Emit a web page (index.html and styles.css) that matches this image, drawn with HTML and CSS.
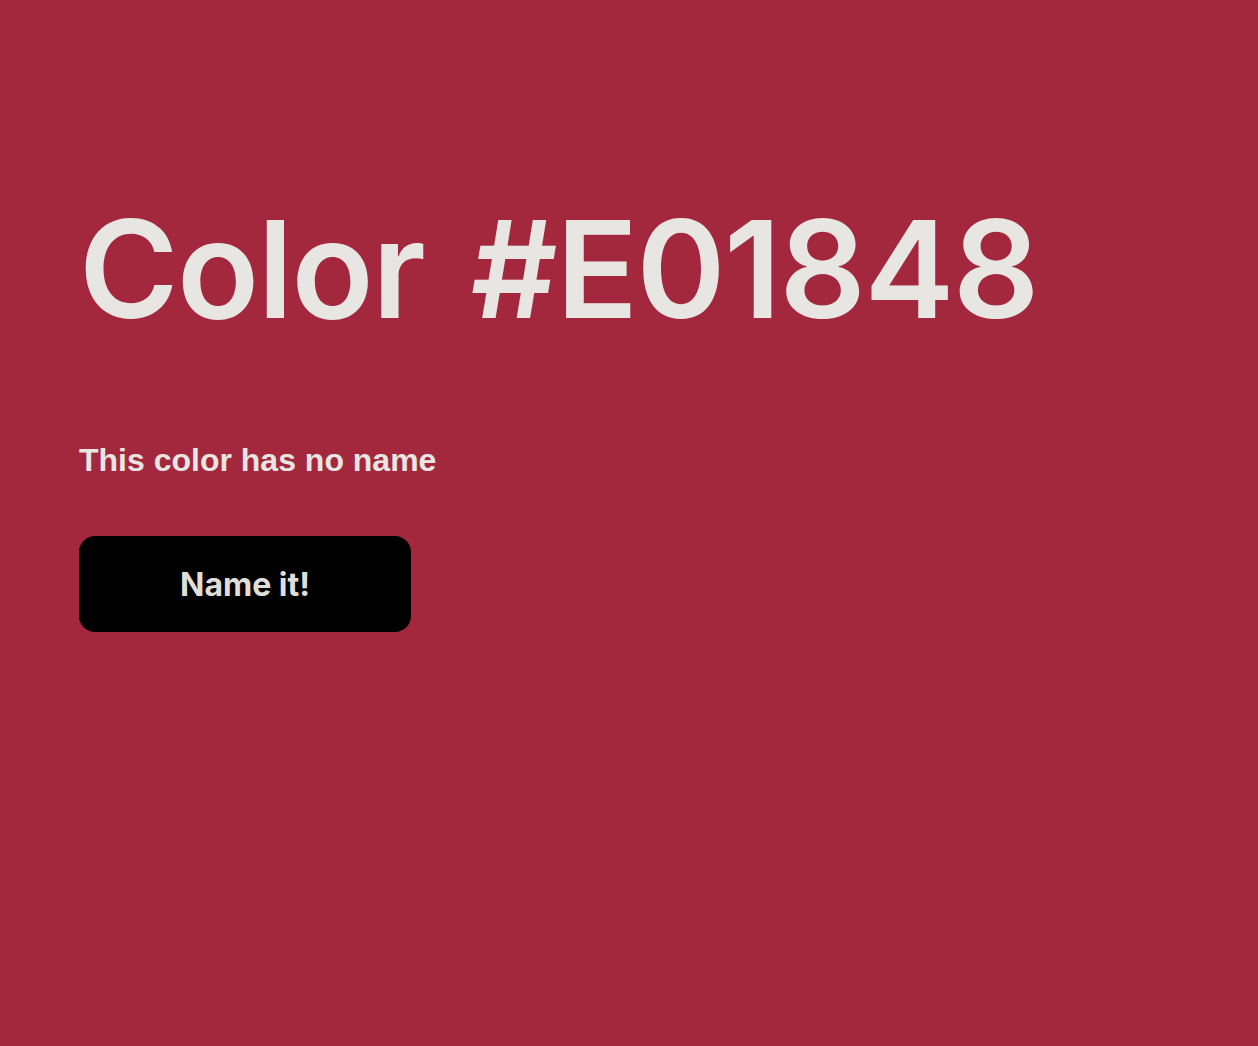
FILE: index.html
```html
<!DOCTYPE html>
<html lang="en">
<head>
<meta charset="utf-8">
<title>Color #E01848</title>
<link rel="stylesheet" href="styles.css">
</head>
<body>
<main class="page">
  <h1 class="title">Color #E01848</h1>
  <p class="subtitle">This color has no name</p>
  <button class="name-btn" type="button">Name it!</button>
</main>
</body>
</html>
```

FILE: styles.css
```css
html, body {
  margin: 0;
  padding: 0;
  background: #a3283e;
  height: 100%;
}
.page {
  padding: 184px 80px 0 79px;
  display: flex;
  flex-direction: column;
  align-items: flex-start;
  color: #e8e6e3;
}
.title {
  margin: 0;
  font-family: "Inter", "Noto Sans", sans-serif;
  font-weight: 600;
  font-size: 135px;
  line-height: 170px;
  letter-spacing: -1.5px;
  word-spacing: 14px;
}
.subtitle {
  margin: 86px 0 0 0;
  font-family: "Liberation Sans", Arial, sans-serif;
  font-weight: 700;
  font-size: 32px;
  line-height: 40px;
}
.name-btn {
  margin-top: 56px;
  width: 332px;
  height: 96px;
  border: none;
  border-radius: 16px;
  background: #000;
  color: #e0deda;
  font-family: "Inter", "Noto Sans", sans-serif;
  font-weight: 700;
  font-size: 32px;
}
```
